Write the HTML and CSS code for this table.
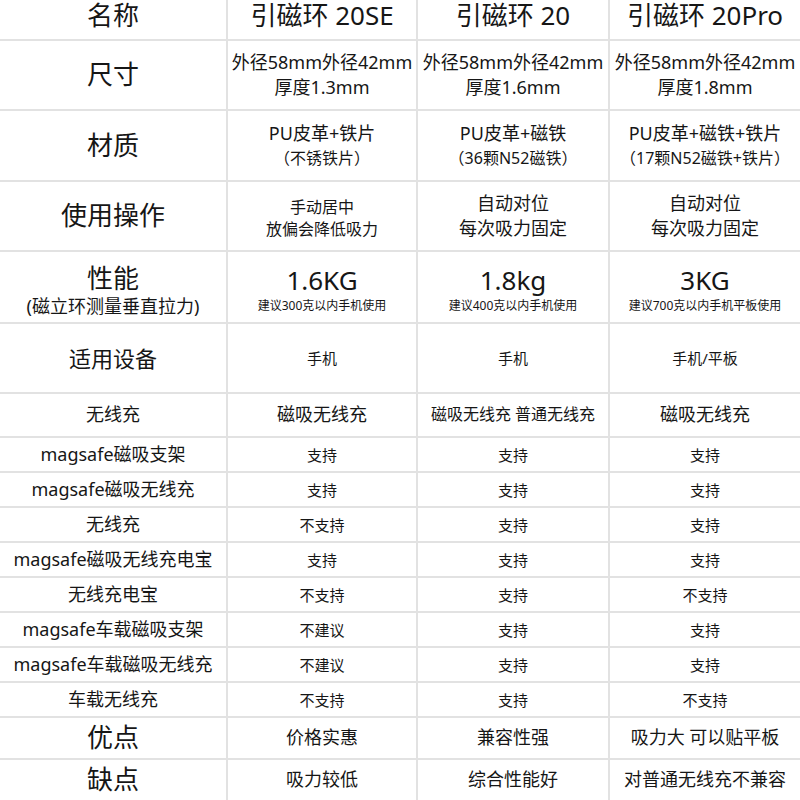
FILE: index.html
```html
<!DOCTYPE html>
<html lang="zh-CN">
<head>
<meta charset="utf-8">
<title>引磁环对比</title>
<link rel="stylesheet" href="styles.css">
</head>
<body>
<div class="table">
  <!-- header -->
  <div class="cell head">名称</div>
  <div class="cell head">引磁环 20SE</div>
  <div class="cell head">引磁环 20</div>
  <div class="cell head">引磁环 20Pro</div>

  <!-- size -->
  <div class="cell t26">尺寸</div>
  <div class="cell t18 lh25"><span>外径58mm外径42mm</span><span>厚度1.3mm</span></div>
  <div class="cell t18 lh25"><span>外径58mm外径42mm</span><span>厚度1.6mm</span></div>
  <div class="cell t18 lh25"><span>外径58mm外径42mm</span><span>厚度1.8mm</span></div>

  <!-- material -->
  <div class="cell t26">材质</div>
  <div class="cell lh25"><span class="t18">PU皮革+铁片</span><span class="t16">（不锈铁片）</span></div>
  <div class="cell lh25"><span class="t18">PU皮革+磁铁</span><span class="t16">（36颗N52磁铁）</span></div>
  <div class="cell lh25"><span class="t18">PU皮革+磁铁+铁片</span><span class="t16">（17颗N52磁铁+铁片）</span></div>

  <!-- operation -->
  <div class="cell t26">使用操作</div>
  <div class="cell t16 lh22 op"><span>手动居中</span><span>放偏会降低吸力</span></div>
  <div class="cell t18 lh25"><span>自动对位</span><span>每次吸力固定</span></div>
  <div class="cell t18 lh25"><span>自动对位</span><span>每次吸力固定</span></div>

  <!-- performance -->
  <div class="cell perf"><span class="t26">性能</span><span class="t18">(磁立环测量垂直拉力)</span></div>
  <div class="cell perf"><span class="big">1.6KG</span><span class="t12">建议300克以内手机使用</span></div>
  <div class="cell perf"><span class="big">1.8kg</span><span class="t12">建议400克以内手机使用</span></div>
  <div class="cell perf"><span class="big">3KG</span><span class="t12">建议700克以内手机平板使用</span></div>

  <!-- devices -->
  <div class="cell t22">适用设备</div>
  <div class="cell t15">手机</div>
  <div class="cell t15">手机</div>
  <div class="cell t15">手机/平板</div>

  <!-- wireless -->
  <div class="cell t18">无线充</div>
  <div class="cell t18">磁吸无线充</div>
  <div class="cell t16">磁吸无线充 普通无线充</div>
  <div class="cell t18">磁吸无线充</div>

  <div class="cell t18">magsafe磁吸支架</div>
  <div class="cell t15">支持</div>
  <div class="cell t15">支持</div>
  <div class="cell t15">支持</div>

  <div class="cell t18">magsafe磁吸无线充</div>
  <div class="cell t15">支持</div>
  <div class="cell t15">支持</div>
  <div class="cell t15">支持</div>

  <div class="cell t18">无线充</div>
  <div class="cell t15">不支持</div>
  <div class="cell t15">支持</div>
  <div class="cell t15">支持</div>

  <div class="cell t18">magsafe磁吸无线充电宝</div>
  <div class="cell t15">支持</div>
  <div class="cell t15">支持</div>
  <div class="cell t15">支持</div>

  <div class="cell t18">无线充电宝</div>
  <div class="cell t15">不支持</div>
  <div class="cell t15">支持</div>
  <div class="cell t15">不支持</div>

  <div class="cell t18">magsafe车载磁吸支架</div>
  <div class="cell t15">不建议</div>
  <div class="cell t15">支持</div>
  <div class="cell t15">支持</div>

  <div class="cell t18">magsafe车载磁吸无线充</div>
  <div class="cell t15">不建议</div>
  <div class="cell t15">支持</div>
  <div class="cell t15">支持</div>

  <div class="cell t18">车载无线充</div>
  <div class="cell t15">不支持</div>
  <div class="cell t15">支持</div>
  <div class="cell t15">不支持</div>

  <!-- pros -->
  <div class="cell t26">优点</div>
  <div class="cell t18">价格实惠</div>
  <div class="cell t18">兼容性强</div>
  <div class="cell t18">吸力大 可以贴平板</div>

  <!-- cons -->
  <div class="cell t26">缺点</div>
  <div class="cell t18">吸力较低</div>
  <div class="cell t18">综合性能好</div>
  <div class="cell t18">对普通无线充不兼容</div>
</div>
</body>
</html>
```

FILE: styles.css
```css
html, body {
  margin: 0;
  padding: 0;
  background: #ffffff;
}

body {
  font-family: "Noto Sans", "Noto Sans CJK SC", sans-serif;
  color: #161616;
  width: 800px;
  height: 800px;
  overflow: hidden;
}

.table {
  display: grid;
  grid-template-columns: 226px 188px 190px 190px;
  grid-template-rows: 39px 68px 69px 68px 70px 68px 42px repeat(8, 33px) 40px 40px;
  gap: 2px;
  background: #e2e2e2;
  width: 800px;
}

.cell {
  background: #ffffff;
  display: flex;
  flex-direction: column;
  align-items: center;
  justify-content: center;
  text-align: center;
  white-space: nowrap;
  line-height: 1.2;
}

.head {
  font-size: 26px;
  line-height: 28px;
  justify-content: flex-start;
  padding-top: 1px;
}

.lh25 { line-height: 25px; }
.lh22 { line-height: 22px; }

.op { padding-top: 4px; }

.t26 { font-size: 26px; }
.t22 { font-size: 22px; }
.t18 { font-size: 18px; }
.t16 { font-size: 16px; }
.t15 { font-size: 15px; }
.t12 { font-size: 12px; }

.perf {
  line-height: 1.15;
  padding-top: 5px;
}
.perf .t26 { line-height: 32px; }
.perf .t18 { line-height: 24px; }

.big {
  font-size: 26px;
  line-height: 32px;
}
.perf .t12 { line-height: 20px; }
```
